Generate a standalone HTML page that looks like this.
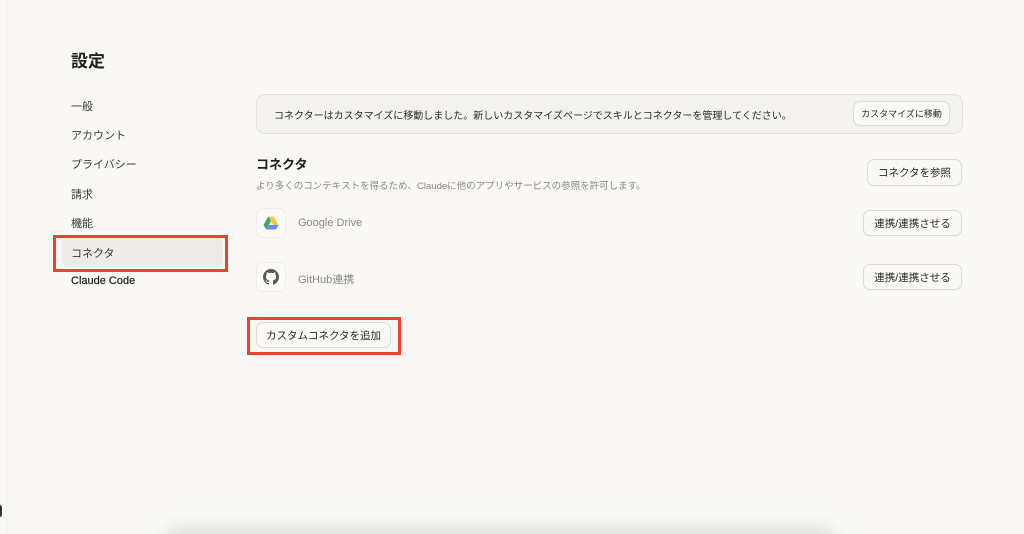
<!DOCTYPE html>
<html><head><meta charset="utf-8"><style>
*{margin:0;padding:0;box-sizing:border-box}
html,body{width:1024px;height:534px;overflow:hidden}
body{background:#f9f8f6;font-family:"Liberation Sans","Noto Sans CJK JP",sans-serif;color:#2b2a27;position:relative}
.a{position:absolute;white-space:nowrap}
.btn{position:absolute;border:1px solid #dcdad4;border-radius:7px;background:#f9f8f6;font-size:10px;color:#2b2a27;display:flex;align-items:center;justify-content:center;box-shadow:0 1px 1px rgba(0,0,0,.03)}
.nav{position:absolute;left:71px;font-size:11px;color:#3a3936}
.red{position:absolute;border:3px solid #e8452c}
.ic{position:absolute;left:256px;width:30px;height:30px;border-radius:7px;background:#fbfaf8;border:1px solid #efede9;display:flex;align-items:center;justify-content:center}
</style></head><body>
<div class="a" style="left:6px;top:0;width:1px;height:534px;background:#eeede9"></div>
<div class="a" style="left:71px;top:47px;font-size:17px;font-weight:bold;color:#1f1e1c">設定</div>
<div class="nav" style="top:98px">一般</div>
<div class="nav" style="top:127px">アカウント</div>
<div class="nav" style="top:156px">プライバシー</div>
<div class="nav" style="top:186px">請求</div>
<div class="nav" style="top:215px">機能</div>
<div class="a" style="left:62px;top:237px;width:161px;height:30px;border-radius:6px;background:#eeece8"></div>
<div class="nav" style="top:245px">コネクタ</div>
<div class="red" style="left:53px;top:235px;width:175px;height:37px"></div>
<div class="nav" style="top:275px;color:#1f1e1c;-webkit-text-stroke:0.2px #1f1e1c">Claude Code</div>

<div class="a" style="left:256px;top:94px;width:707px;height:40px;border-radius:9px;background:#f3f2ee;border:1px solid #e3e1db"></div>
<div class="a" style="left:274px;top:107px;font-size:10px;color:#2b2a27">コネクターはカスタマイズに移動しました。新しいカスタマイズページでスキルとコネクターを管理してください。</div>
<div class="btn" style="left:853px;top:101px;width:97px;height:25px;font-size:9px">カスタマイズに移動</div>

<div class="a" style="left:256px;top:154px;font-size:13px;font-weight:bold;color:#1f1e1c">コネクタ</div>
<div class="a" style="left:256px;top:178px;font-size:9.5px;color:#8a8883">より多くのコンテキストを得るため、Claudeに他のアプリやサービスの参照を許可します。</div>
<div class="btn" style="left:867px;top:159px;width:95px;height:27px;font-size:10.5px">コネクタを参照</div>

<div class="ic" style="top:208px"><svg width="16" height="14" viewBox="0 0 16 14"><path d="M5.3 0.5h5.4L15.5 9h-5.4z" fill="#f5c842"/><path d="M5.3 0.5L0.5 9l2.7 4.5L8 5z" fill="#3fa55a"/><path d="M3.2 13.5h9.6l2.7-4.5H5.9z" fill="#5f8ef0"/></svg></div>
<div class="a" style="left:298px;top:217px;font-size:11px;color:#8a8883">Google Drive</div>
<div class="btn" style="left:863px;top:210px;width:99px;height:26px;font-size:10.5px">連携/連携させる</div>

<div class="ic" style="top:262px"><svg width="16" height="16" viewBox="0 0 16 16"><path fill="#5a5955" d="M8 0C3.58 0 0 3.58 0 8c0 3.540 2.290 6.530 5.470 7.590.4.07.55-.17.55-.38v-1.330c-2.230.48-2.700-1.080-2.700-1.080-.36-.92-.89-1.170-.89-1.170-.73-.5.05-.49.05-.49.8.06 1.230.82 1.230.82.72 1.230 1.870.87 2.330.67.07-.52.28-.87.51-1.070-1.780-.2-3.640-.89-3.640-3.950 0-.87.31-1.590.82-2.150-.08-.2-.36-1.020.08-2.120 0 0 .67-.21 2.200.82A7.6 7.6 0 0 1 8 3.890c.68 0 1.360.09 2 .27 1.530-1.040 2.200-.82 2.200-.82.44 1.100.16 1.920.08 2.120.51.56.82 1.270.82 2.150 0 3.070-1.870 3.750-3.650 3.950.29.25.54.73.54 1.480v2.200c0 .21.15.46.55.38A8.010 8.010 0 0 0 16 8c0-4.420-3.580-8-8-8z"/></svg></div>
<div class="a" style="left:298px;top:271px;font-size:11px;color:#8a8883">GitHub連携</div>
<div class="btn" style="left:863px;top:264px;width:99px;height:26px;font-size:10.5px">連携/連携させる</div>

<div class="btn" style="left:256px;top:322px;width:135px;height:26px;font-size:10.5px">カスタムコネクタを追加</div>
<div class="red" style="left:247px;top:317px;width:154px;height:38px"></div>

<div class="a" style="left:165px;top:526px;width:670px;height:30px;border-radius:14px;background:#e2e1de;filter:blur(7px)"></div>
<div class="a" style="left:-3px;top:505px;width:5px;height:12px;border-radius:3px;background:#333"></div>
</body></html>
